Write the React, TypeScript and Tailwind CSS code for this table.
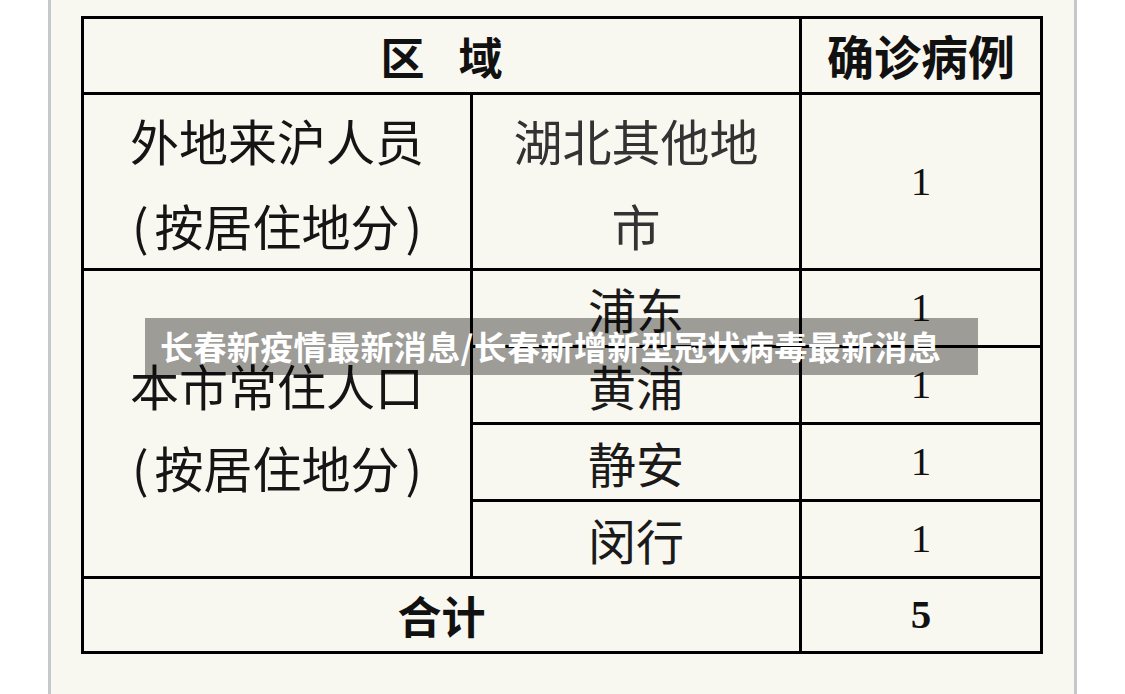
const cjk = { fontFamily: '"Noto Sans CJK SC", "Noto Sans", sans-serif' }
const serif = { fontFamily: '"Liberation Serif", "DejaVu Serif", serif' }

const districts = ['浦东', '黄浦', '静安', '闵行']

function Count({ value, bold = false }: { value: string; bold?: boolean }) {
  return (
    <div
      className={`flex items-center justify-center bg-[#f9f8f0] text-[41px] text-[#111] ${bold ? 'font-bold' : ''}`}
      style={serif}
    >
      {value}
    </div>
  )
}

// "(按居住地分)" with the wider paren spacing of the original
function ByResidence() {
  return (
    <span className="flex items-center">
      <span className="mr-[6px]">(</span>
      按居住地分
      <span className="ml-[6px]">)</span>
    </span>
  )
}

export default function App() {
  return (
    <div className="relative h-[694px] w-full overflow-hidden bg-white" style={cjk}>
      <div className="ml-[48px] h-full w-[1029px] border-x-[3px] border-[#c4c7cc] bg-[#f9f8f0] pl-[30px] pt-[16px]">
        <div className="grid w-[962px] grid-cols-[386px_326px_238px] grid-rows-[73px_173px_74px_74px_74px_74px_72px] gap-[3px] bg-black p-[3px]">
          {/* header */}
          <div className="col-span-2 flex items-center justify-center gap-[34px] bg-[#f9f8f0] text-[44px] font-bold text-[#111]">
            <span>区</span>
            <span>域</span>
          </div>
          <div className="flex items-center justify-center bg-[#f9f8f0] text-[47px] font-bold text-[#111]">
            确诊病例
          </div>

          {/* 外地来沪 */}
          <div className="flex flex-col items-center justify-center bg-[#f9f8f0] text-[49px] leading-[85px] text-[#151515]">
            <span>外地来沪人员</span>
            <ByResidence />
          </div>
          <div className="flex flex-col items-center justify-center bg-[#f9f8f0] text-[49px] leading-[85px] text-[#333]">
            <span>湖北其他地</span>
            <span>市</span>
          </div>
          <Count value="1" />

          {/* 本市常住 */}
          <div className="row-span-4 flex flex-col items-center justify-center bg-[#f9f8f0] pt-[4px] text-[49px] leading-[82px] text-[#151515]">
            <span>本市常住人口</span>
            <ByResidence />
          </div>
          {districts.map((d) => (
            <div key={d} className="contents">
              <div className="flex items-center justify-center bg-[#f9f8f0] text-[48px] text-[#1a1a1a]">{d}</div>
              <Count value="1" />
            </div>
          ))}

          {/* total */}
          <div className="col-span-2 flex items-center justify-center bg-[#f9f8f0] text-[44px] font-bold text-[#111]">
            合计
          </div>
          <Count value="5" bold />
        </div>
      </div>

      {/* title banner */}
      <div className="absolute left-[145px] top-[318px] flex h-[57px] w-[833px] items-center bg-[rgba(0,0,0,0.37)] pl-[15px]">
        <span className="text-[33px] font-bold leading-none tracking-[0.4px] text-white">
          长春新疫情最新消息/长春新增新型冠状病毒最新消息
        </span>
      </div>
    </div>
  )
}
